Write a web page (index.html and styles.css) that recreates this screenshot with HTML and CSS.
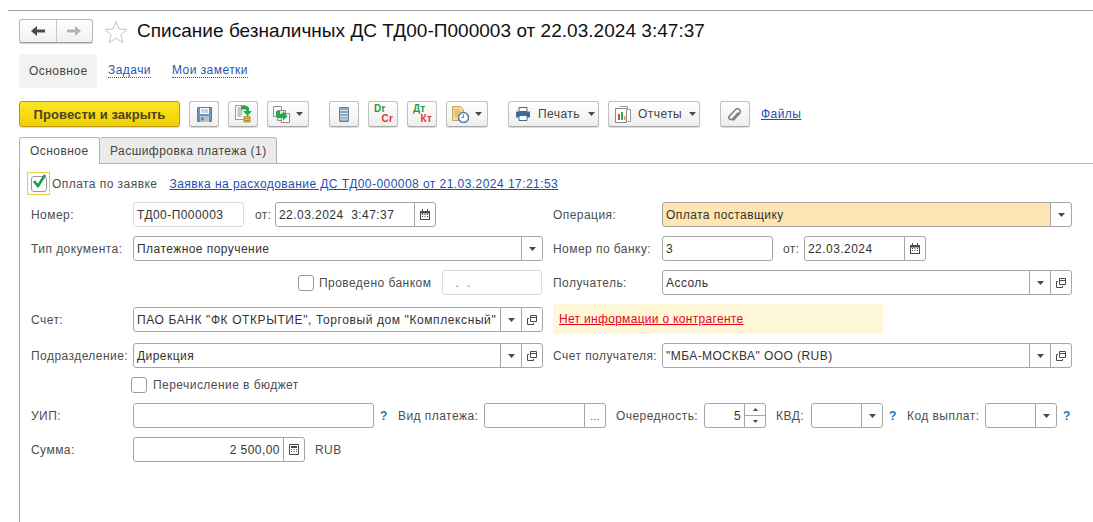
FILE: index.html
```html
<!DOCTYPE html>
<html lang="ru">
<head>
<meta charset="utf-8">
<title>Списание безналичных ДС</title>
<link rel="stylesheet" href="styles.css">
</head>
<body>
<svg class="defs" width="0" height="0" aria-hidden="true">
  <symbol id="tri" viewBox="0 0 7 4"><path d="M0 0h7L3.500 4z" fill="#4a4a4a"/></symbol>
  <symbol id="open" viewBox="0 0 10 10"><path d="M3.500 .5h6v6h-6z M3.500 2.500h6" fill="none" stroke="#4a4a4a"/><path d="M.5 3.500v6h6v-1.500M.5 3.500h1.500" fill="none" stroke="#4a4a4a"/></symbol>
  <symbol id="cal" viewBox="0 0 10 11"><path d="M0 2h10v9H0z" fill="#4a4a4a"/><path d="M2 0h1v3H2zM7 0h1v3H7z" fill="#4a4a4a"/><path d="M1 4.500h8v5.500H1z" fill="#fff"/><path d="M2 5h1v1H2zM4.500 5h1v1h-1zM7 5h1v1H7zM2 7h1v1H2zM4.500 7h1v1h-1zM7 7h1v1H7z" fill="#4a4a4a"/></symbol>
  <symbol id="calc" viewBox="0 0 10 11"><path d="M.5 .5h9v10h-9z" fill="#fff" stroke="#4a4a4a"/><path d="M2 2h6v2H2zM2 5h1v1H2zM4.500 5h1v1h-1zM7 5h1v1H7zM2 7h1v1H2zM4.500 7h1v1h-1zM7 7h1v1H7z" fill="#4a4a4a"/></symbol>
</svg>
<div class="topline"></div>
<header class="head">
  <div class="nav">
    <span class="nav-btn"><svg width="16" height="12" viewBox="0 0 16 12"><path d="M1 6l6-5v3.500h8v3H7V11z" fill="#4a4a4a"/></svg></span>
    <span class="nav-btn"><svg width="16" height="12" viewBox="0 0 16 12"><path d="M15 6L9 1v3.500H1v3h8V11z" fill="#b4b4b4"/></svg></span>
  </div>
  <svg class="star" width="24" height="23" viewBox="0 0 24 23"><path d="M12 1.500l3 7.500 8 .6-6.100 5.100 1.900 7.800L12 18.200 5.200 22.500l1.900-7.800L1 9.600 9 9z" fill="#fff" stroke="#c4c4c4"/></svg>
  <h1 class="title">Списание безналичных ДС ТД00-П000003 от 22.03.2024 3:47:37</h1>
</header>
<nav class="sections">
  <span class="section active">Основное</span>
  <a class="section-link first">Задачи</a>
  <a class="section-link second">Мои заметки</a>
</nav>
<div class="toolbar">
  <button class="btn primary">Провести и закрыть</button>
  <button class="btn icon save"><svg width="15" height="15" viewBox="0 0 15 15"><path d="M.5 .5h14v14H.5z" fill="#6d93bf" stroke="#5a7ca6"/><path d="M3 1h9v6H3z" fill="#fff"/><path d="M4 3h7M4 5h7" stroke="#8fa9c8"/><path d="M3 9h9v6H3z" fill="#b4c2d2"/><path d="M4.500 10.500h2v3h-2z" fill="#5b6f86"/></svg></button>
  <button class="btn icon doc"><svg width="17" height="18" viewBox="0 0 17 18"><path d="M.5 .5h10l2 2v12H.5z" fill="#fff" stroke="#9a9a9a"/><path d="M2.500 3h6M2.500 5h5M2.500 7h5M2.500 9h5M2.500 11h4" stroke="#8c8c8c"/><path d="M9 11.500h6v5.500H9z" fill="#e3c04c" stroke="#b3922c"/><path d="M9 13.500h6M9 15.500h6" stroke="#b3922c"/><path d="M6 1h5a3 3 0 0 1 3 3v2h3l-4.500 5L8 6h3V4.500H6z" fill="#23a948"/></svg></button>
  <button class="btn icon drop"><svg width="17" height="17" viewBox="0 0 17 17"><path d="M.5 .5h8v10h-8z" fill="#fff" stroke="#8c8c8c"/><path d="M4.500 4.500h8v10h-8z" fill="#eee" stroke="#8c8c8c"/><path d="M8.500 7.500h8v9h-8z" fill="#fff" stroke="#8c8c8c"/><path d="M3 5h4v3h3V5l4.500 5L10 15v-3H5a2 2 0 0 1-2-2z" fill="#25ab49"/></svg><svg class="caret" width="7" height="4"><use href="#tri"/></svg></button>
  <button class="btn icon ledger"><svg width="10" height="15" viewBox="0 0 10 15"><path d="M.5 .5h9v14h-9z" fill="#8ba7c4" stroke="#6c87a3"/><path d="M1 3.500h8M1 6.500h8M1 9.500h8M1 12h8" stroke="#dbe5ef"/></svg></button>
  <button class="btn icon dc"><span class="dc-top">Dr</span><span class="dc-bot">Cr</span></button>
  <button class="btn icon dc"><span class="dc-top">Дт</span><span class="dc-bot">Кт</span></button>
  <button class="btn icon drop clock"><svg width="17" height="17" viewBox="0 0 17 17"><path d="M.5 .5h8l3 3v11H.5z" fill="#f5dd97" stroke="#c9a752"/><path d="M2.500 4h5M2.500 6h6M2.500 8h4M2.500 10h3" stroke="#c9a752"/><circle cx="11.500" cy="11.500" r="5" fill="#fff" stroke="#4f7db0" stroke-width="1.500"/><path d="M11.500 8.500v3h-2" stroke="#d4483c" fill="none"/></svg><svg class="caret" width="7" height="4"><use href="#tri"/></svg></button>
  <button class="btn text print"><svg width="14" height="14" viewBox="0 0 14 14"><path d="M3 .5h8v4H3z" fill="#fff" stroke="#3f6a95"/><path d="M0 4.500h14v6H0z" fill="#3f6a95"/><path d="M3 8.500h8v5H3z" fill="#fff" stroke="#3f6a95"/></svg><span>Печать</span><svg class="caret" width="7" height="4"><use href="#tri"/></svg></button>
  <button class="btn text reports"><svg width="16" height="17" viewBox="0 0 16 17"><path d="M4.500 .5h8v3h3v12h-3" fill="#fff" stroke="#9a9a9a"/><path d="M.5 2.500h11v14H.5z" fill="#fff" stroke="#8a8a8a"/><path d="M3 8h2v6H3z" fill="#d8483a"/><path d="M6 6h2v8H6z" fill="#39a849"/><path d="M9 10h1.500v4H9z" fill="#d8a03a"/></svg><span>Отчеты</span><svg class="caret" width="7" height="4"><use href="#tri"/></svg></button>
  <button class="btn icon clip"><svg width="14" height="15" viewBox="0 0 14 15"><path d="M11.500 5.500l-6 6.500a2 2 0 0 1-3-3l6.500-7a3 3 0 0 1 4 4l-7 7.500" transform="translate(-1 0)" fill="none" stroke="#7d7d7d" stroke-width="1.500"/></svg></button>
  <a class="files">Файлы</a>
</div>
<div class="tabs">
  <span class="tab current">Основное</span>
  <span class="tab other">Расшифровка платежа (1)</span>
  <span class="tab-rest"></span>
</div>
<main class="panel">
  <div class="pay-row">
    <span class="focus"><span class="check on"><svg width="16" height="16" viewBox="0 0 16 16"><path d="M3 7l4 5 7-11" fill="none" stroke="#1a9c4b" stroke-width="2.600"/></svg></span></span>
    <span class="lbl pay-label">Оплата по заявке</span>
    <a class="plain-link">Заявка на расходование ДС ТД00-000008 от 21.03.2024 17:21:53</a>
  </div>
  <div class="cols">
    <section class="col left">
      <div class="row">
        <span class="lbl name">Номер:</span>
        <span class="field ro w111"><span class="val">ТД00-П000003</span></span>
        <span class="lbl ot">от:</span>
        <span class="field w161"><span class="val">22.03.2024  3:47:37</span><span class="fb"><svg width="10" height="11"><use href="#cal"/></svg></span></span>
      </div>
      <div class="row">
        <span class="lbl name">Тип документа:</span>
        <span class="field grow"><span class="val">Платежное поручение</span><span class="fb"><svg width="7" height="4"><use href="#tri"/></svg></span></span>
      </div>
      <div class="row bank">
        <span class="check"></span>
        <span class="lbl bank-label">Проведено банком</span>
        <span class="field ro w100"><span class="val dots">  .  .</span></span>
      </div>
      <div class="row acc">
        <span class="lbl name">Счет:</span>
        <span class="field grow"><span class="val caps">ПАО БАНК "ФК ОТКРЫТИЕ", Торговый дом "Комплексный"</span><span class="fb"><svg width="7" height="4"><use href="#tri"/></svg></span><span class="fb"><svg width="10" height="10"><use href="#open"/></svg></span></span>
      </div>
      <div class="row dept">
        <span class="lbl name">Подразделение:</span>
        <span class="field grow"><span class="val">Дирекция</span><span class="fb"><svg width="7" height="4"><use href="#tri"/></svg></span><span class="fb"><svg width="10" height="10"><use href="#open"/></svg></span></span>
      </div>
    </section>
    <section class="col right">
      <div class="row">
        <span class="lbl rname">Операция:</span>
        <span class="field grow orange"><span class="val">Оплата поставщику</span><span class="fb"><svg width="7" height="4"><use href="#tri"/></svg></span></span>
      </div>
      <div class="row">
        <span class="lbl rname">Номер по банку:</span>
        <span class="field w111"><span class="val">3</span></span>
        <span class="lbl ot2">от:</span>
        <span class="field w122"><span class="val">22.03.2024</span><span class="fb"><svg width="10" height="11"><use href="#cal"/></svg></span></span>
      </div>
      <div class="row">
        <span class="lbl rname">Получатель:</span>
        <span class="field grow"><span class="val">Ассоль</span><span class="fb"><svg width="7" height="4"><use href="#tri"/></svg></span><span class="fb"><svg width="10" height="10"><use href="#open"/></svg></span></span>
      </div>
      <div class="warn"><a class="warn-link">Нет информации о контрагенте</a></div>
      <div class="row rdept">
        <span class="lbl rname">Счет получателя:</span>
        <span class="field grow"><span class="val">"МБА-МОСКВА" ООО (RUB)</span><span class="fb"><svg width="7" height="4"><use href="#tri"/></svg></span><span class="fb"><svg width="10" height="10"><use href="#open"/></svg></span></span>
      </div>
    </section>
  </div>
  <div class="budget">
    <span class="check"></span>
    <span class="lbl budget-label">Перечисление в бюджет</span>
  </div>
  <div class="row wide">
    <span class="lbl name">УИП:</span>
    <span class="field w241"></span>
    <span class="q q1">?</span>
    <span class="lbl pay-kind">Вид платежа:</span>
    <span class="field w122"><span class="val"></span><span class="fb more">...</span></span>
    <span class="lbl queue">Очередность:</span>
    <span class="field w62"><span class="val num">5</span><span class="spin"><svg width="5" height="3" viewBox="0 0 7 4"><path d="M0 4h7L3.500 0z" fill="#4a4a4a"/></svg><svg width="5" height="3"><use href="#tri"/></svg></span></span>
    <span class="lbl kvd">КВД:</span>
    <span class="field w72"><span class="val"></span><span class="fb"><svg width="7" height="4"><use href="#tri"/></svg></span></span>
    <span class="q q2">?</span>
    <span class="lbl code">Код выплат:</span>
    <span class="field w72"><span class="val"></span><span class="fb"><svg width="7" height="4"><use href="#tri"/></svg></span></span>
    <span class="q q3">?</span>
  </div>
  <div class="row sum">
    <span class="lbl name">Сумма:</span>
    <span class="field w172"><span class="val num">2 500,00</span><span class="fb"><svg width="10" height="11"><use href="#calc"/></svg></span></span>
    <span class="lbl cur">RUB</span>
  </div>
</main>
</body>
</html>
```
FILE: styles.css
```css
* { box-sizing: border-box; }
html, body { margin: 0; padding: 0; }
body {
  width: 1093px;
  height: 522px;
  overflow: hidden;
  background: #fff;
  font: 12px "Liberation Sans", Arial, sans-serif;
  letter-spacing: .45px;
  color: #333;
}
.defs { display: block; height: 0; }
.topline { height: 1px; margin: 10px 0 0 8px; background: #a8a8a8; }
.head { display: flex; align-items: center; height: 24px; margin: 8px 0 0 19px; }
.nav { display: flex; width: 74px; height: 24px; border: 1px solid #b8b8b8; border-bottom-color: #9a9a9a; border-radius: 3px; background: linear-gradient(#fff, #f0f0f0); box-shadow: 0 1px 1px rgba(0,0,0,.18); }
.nav-btn { flex: 1; display: flex; align-items: center; justify-content: center; }
.nav-btn + .nav-btn { border-left: 1px solid #c8c8c8; }
.star { margin-left: 11px; }
.title { margin: 0 0 0 9px; font-size: 19px; font-weight: 400; letter-spacing: .03px; color: #111; white-space: nowrap; }
.sections { display: flex; align-items: center; height: 34px; margin: 11px 0 0 19px; }
.section { display: flex; align-items: center; width: 78px; height: 34px; padding: 0 10px; background: #f2f2f2; border-radius: 3px; color: #444; }
.section-link { color: #2456b0; border-bottom: 1px dotted #2456b0; line-height: 13px; }
.section-link.first { margin-left: 11px; }
.section-link.second { margin-left: 21px; }
.toolbar { display: flex; align-items: center; height: 26px; margin: 13px 0 0 19px; }
.btn { display: flex; align-items: center; justify-content: center; flex: none; height: 26px; padding: 0; margin: 0 9px 0 0; border: 1px solid #c0c0c0; border-bottom-color: #a8a8a8; border-radius: 3px; background: linear-gradient(#fff, #eee); box-shadow: 0 1px 1px rgba(0,0,0,.15); font: inherit; letter-spacing: inherit; color: #444; }
.primary { width: 161px; border-color: #b39a10; background: linear-gradient(#fbe626, #f2cf00); font-size: 13px; font-weight: 700; letter-spacing: .08px; color: #4a4520; }
.icon { width: 30px; }
.drop { width: 42px; margin-right: 20px; gap: 6px; }
.dc { flex-direction: column; align-items: stretch; font-size: 10px; font-weight: 700; letter-spacing: .2px; line-height: 10px; }
.dc-top { color: #1a9c4b; padding-left: 5px; text-align: left; }
.dc-bot { color: #e2343b; padding-right: 4px; text-align: right; }
.text { justify-content: flex-start; width: 91px; }
.print { padding-left: 7px; gap: 8px; }
.reports { width: 92px; padding-left: 6px; gap: 7px; margin-right: 20px; }
.clip { margin-right: 11px; }
.files { color: #1a4fb4; text-decoration: underline; }
.tabs { display: flex; align-items: flex-end; height: 27px; margin: 10px 0 0 19px; }
.tab { display: flex; align-items: center; height: 27px; border: 1px solid #b4b4b4; border-radius: 3px 3px 0 0; color: #444; white-space: nowrap; }
.tab.current { width: 81px; padding-left: 10px; border-bottom: 0; background: #fff; }
.tab.other { width: 177px; padding-left: 10px; background: #ebebeb; border-left: 0; }
.tab-rest { flex: 1; border-bottom: 1px solid #b4b4b4; }
.panel { margin-left: 19px; padding: 8px 0 0 0; height: 358px; border-left: 1px solid #a8a8a8; }
.lbl { color: #4d4d4d; white-space: nowrap; }
.pay-row { display: flex; align-items: center; height: 23px; margin-left: 7px; }
.focus { display: flex; align-items: center; justify-content: center; width: 23px; height: 23px; border: 1px solid #f2c94c; }
.check { display: block; flex: none; width: 16px; height: 16px; border: 1px solid #9a9a9a; border-radius: 3px; background: #fff; }
.check.on { position: relative; }
.check.on svg { position: absolute; left: -1px; top: -3px; }
.pay-label { margin-left: 2px; }
.plain-link { margin-left: 12px; color: #1a4fb4; text-decoration: underline; }
.cols { display: flex; margin-top: 7px; }
.col.left { width: 523px; padding-left: 11px; }
.col.right { width: 519px; margin-left: 10px; }
.row { display: flex; align-items: center; height: 25px; margin-bottom: 9px; }
.name { flex: none; width: 102px; }
.rname { flex: none; width: 109px; }
.ot { margin: 0 5px 0 11px; width: 15px; }
.ot2 { margin: 0 5px 0 10px; width: 16px; }
.field { display: flex; align-items: stretch; flex: none; height: 25px; border: 1px solid #a6a6a6; border-radius: 3px; background: #fff; color: #333; }
.field.ro { border-color: #dcdcdc; }
.val { flex: 1; min-width: 0; padding-left: 3px; line-height: 25px; white-space: pre; overflow: hidden; }
.fb { flex: none; width: 21px; display: flex; align-items: center; justify-content: center; border-left: 1px solid #a6a6a6; }
.grow { flex: 1; }
.w111 { width: 111px; }
.w161 { width: 161px; }
.w100 { width: 100px; }
.w122 { width: 122px; }
.w241 { width: 241px; }
.w62 { width: 62px; }
.w72 { width: 72px; }
.w172 { width: 172px; }
.orange { background: #fee5b1; }
.orange .fb { background: #fff; border-radius: 0 3px 3px 0; }
.bank { margin-bottom: 12px; padding-left: 267px; }
.bank-label { width: 123px; margin-left: 5px; }
.dots { color: #666; padding-left: 5px; }
.acc { margin-bottom: 11px; }
.dept { margin-bottom: 0; }
.caps { letter-spacing: .6px; }
.warn { display: flex; align-items: center; width: 330px; height: 30px; margin-bottom: 9px; padding-left: 6px; background: #fff8d8; }
.warn-link { color: #e8001c; letter-spacing: .31px; text-decoration: underline; }
.rdept { margin-bottom: 0; }
.budget { display: flex; align-items: center; height: 20px; margin: 7px 0 8px 111px; }
.budget-label { margin-left: 6px; }
.wide { margin-left: 11px; }
.q { flex: none; font-weight: 700; color: #1577b8; width: 8px; }
.q1 { margin-left: 6px; }
.pay-kind { margin: 0 5px 0 10px; width: 81px; }
.queue { margin: 0 5px 0 10px; width: 83px; }
.kvd { margin: 0 5px 0 10px; width: 30px; }
.q2 { margin-left: 6px; }
.code { margin: 0 5px 0 10px; width: 73px; }
.q3 { margin-left: 6px; }
.more { color: #555; align-items: flex-end; padding-bottom: 5px; font-size: 10px; }
.num { text-align: right; padding-right: 3px; }
.spin { flex: none; width: 21px; display: flex; flex-direction: column; align-items: center; justify-content: space-around; border-left: 1px solid #a6a6a6; background: linear-gradient(transparent 11px, #a6a6a6 11px, #a6a6a6 12px, transparent 12px); }
.sum { margin-bottom: 0; margin-left: 11px; }
.cur { margin-left: 10px; }
```
